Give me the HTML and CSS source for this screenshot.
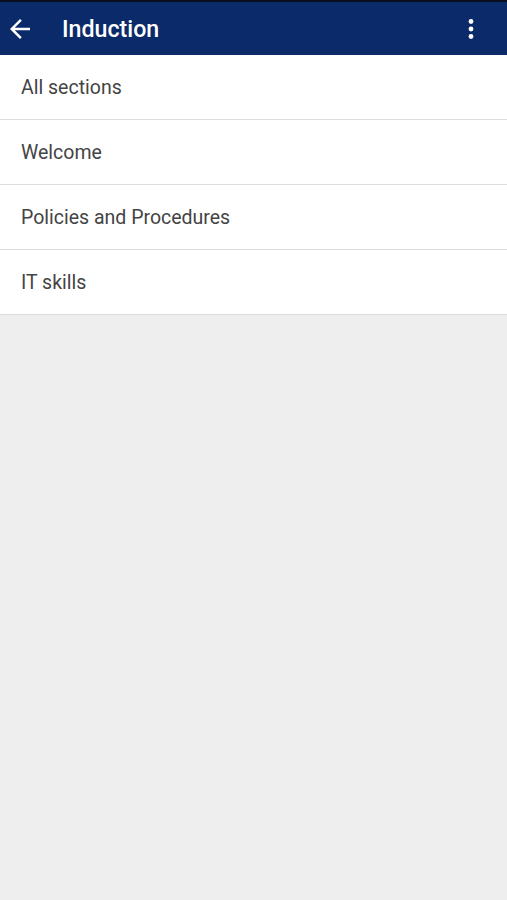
FILE: index.html
```html
<!DOCTYPE html>
<html>
<head>
<meta charset="utf-8">
<link rel="stylesheet" href="styles.css">
</head>
<body>
<div class="app">
  <header class="topbar">
    <button class="icon-btn back" aria-label="Back">
      <svg width="30" height="30" viewBox="0 0 24 24"><path d="M20 11H7.83l5.59-5.59L12 4l-8 8 8 8 1.41-1.41L7.83 13H20v-2z" fill="#fff"/></svg>
    </button>
    <h1 class="title">Induction</h1>
    <button class="icon-btn more" aria-label="More">
      <svg width="24" height="24" viewBox="0 0 24 24"><circle cx="12" cy="4.5" r="2.4" fill="#fff"/><circle cx="12" cy="12" r="2.4" fill="#fff"/><circle cx="12" cy="19.5" r="2.4" fill="#fff"/></svg>
    </button>
  </header>
  <ul class="list">
    <li class="row">All sections</li>
    <li class="row">Welcome</li>
    <li class="row">Policies and Procedures</li>
    <li class="row">IT skills</li>
  </ul>
</div>
</body>
</html>
```
FILE: styles.css
```css
html, body {
  margin: 0;
  padding: 0;
  height: 100%;
  background: #eeeeee;
  font-family: Roboto, "Noto Sans", sans-serif;
}
.app {
  min-height: 100%;
  background: #eeeeee;
}
.topbar {
  height: 53px;
  border-top: 2px solid #0a0f1e;
  background: #0b2a69;
  display: flex;
  align-items: center;
  box-sizing: content-box;
}
.icon-btn {
  background: none;
  border: 0;
  padding: 0;
  display: flex;
  align-items: center;
  justify-content: center;
}
.back {
  width: 30px;
  height: 30px;
  margin-left: 5px;
}
.title {
  margin: 0 0 0 27px;
  font-size: 23.2px;
  font-weight: 500;
  color: #fff;
  flex: 1;
}
.more {
  width: 24px;
  height: 24px;
  margin-right: 24px;
}
.list {
  list-style: none;
  margin: 0;
  padding: 0;
  background: #fff;
}
.row {
  height: 64px;
  display: flex;
  align-items: center;
  padding-left: 21px;
  padding-bottom: 0;
  font-size: 19.5px;
  color: #444;
  border-bottom: 1px solid #dddddd;
  box-sizing: content-box;
}
.row > * { margin-top: -1px; }
```
